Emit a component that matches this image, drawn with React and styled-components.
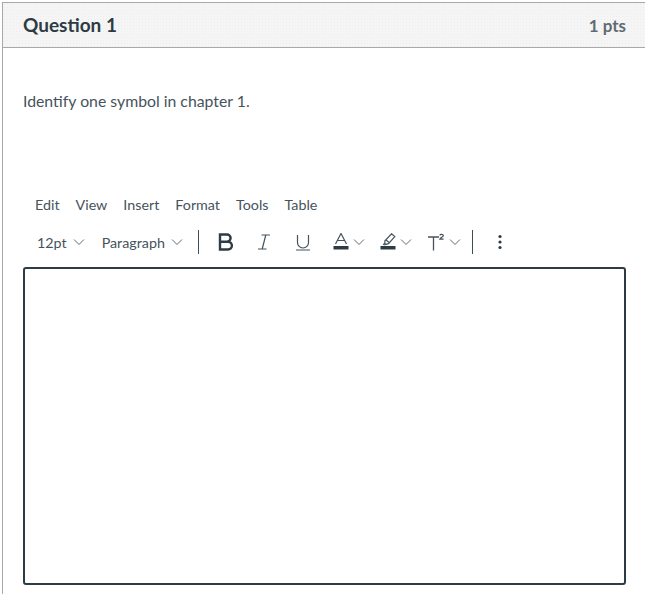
import React from "react";
import styled, { createGlobalStyle } from "styled-components";

const Global = createGlobalStyle`
  html, body { margin: 0; padding: 0; background: #fff; }
  body { font-family: Lato, "Open Sans", sans-serif; color: #2d3b45; }
  #root { width: 645px; height: 594px; overflow: hidden; }
`;

const Card = styled.div`
  margin: 2px 0 0 2px;
  height: 592px;
  box-sizing: border-box;
  border-top: 1px solid #a8a8a8;
  border-left: 1px solid #a8a8a8;
`;

const Header = styled.div`
  height: 45px;
  box-sizing: border-box;
  border-bottom: 1px solid #a8a8a8;
  background-color: #f5f5f5;
  background-image: radial-gradient(#eeeeee 0.6px, transparent 0.7px);
  background-size: 3px 3px;
  display: flex;
  align-items: center;
  justify-content: space-between;
  padding: 0 19px 0 20px;
`;

const Title = styled.div`
  font-size: 19px;
  font-weight: 700;
  color: #2d3b45;
  padding-bottom: 2px;
`;

const Points = styled.div`
  font-size: 17px;
  font-weight: 700;
  color: #5f6b73;
`;

const Body = styled.div`
  padding: 43px 19px 0 20px;
`;

const Prompt = styled.p`
  margin: 0;
  font-size: 15.8px;
  line-height: 20px;
  color: #46535c;
`;

const Menubar = styled.div`
  display: flex;
  margin-top: 83px;
  padding-left: 12px;
  gap: 16px;
  height: 20px;
  align-items: center;
`;

const MenuItem = styled.span`
  font-size: 14.3px;
  color: #46535c;
`;

const Toolbar = styled.div`
  display: flex;
  align-items: center;
  height: 34px;
  margin-top: 11px;
  padding-left: 14px;
`;

const Select = styled.span`
  display: flex;
  align-items: center;
  gap: 6px;
  font-size: 14.3px;
  color: #46535c;
  margin-right: ${(p) => p.$gap}px;
`;

const Divider = styled.span`
  width: 1px;
  height: 24px;
  background: #3f4d57;
  margin-right: ${(p) => p.$gap}px;
`;

const Tool = styled.span`
  display: flex;
  align-items: center;
  gap: 4px;
  margin-right: ${(p) => p.$gap}px;
  color: #2d3b45;
`;

const Editor = styled.div`
  margin-top: 8px;
  width: 603px;
  height: 318px;
  box-sizing: border-box;
  border: 2px solid #2d3b45;
  border-radius: 3px;
  background: #fff;
`;

const Chevron = () => (
  <svg width="12" height="8" viewBox="0 0 12 8" fill="none" stroke="#5f6b73" strokeWidth="1">
    <path d="M1 1.5 6 6.5 11 1.5" />
  </svg>
);

const Bold = () => (
  <svg width="16" height="18" viewBox="0 0 16 18" fill="none" stroke="#2d3b45" strokeWidth="2.4">
    <path d="M2 1.5H9a3.6 3.6 0 0 1 0 7.2H2V1.5ZM2 8.7H10a3.9 3.9 0 0 1 0 7.8H2V8.7Z" />
  </svg>
);

const Italic = () => (
  <svg width="14" height="16" viewBox="0 0 14 16" fill="none" stroke="#46535c" strokeWidth="1.2">
    <path d="M4.5 1H13M1 15H9.5M8.8 1 5.2 15" />
  </svg>
);

const Underline = () => (
  <svg width="16" height="17" viewBox="0 0 16 17" fill="none" stroke="#46535c" strokeWidth="1.2">
    <path d="M2.5 1v7.5a5.5 5.5 0 0 0 11 0V1M1 16H15" />
  </svg>
);

const TextColor = () => (
  <svg width="16" height="18" viewBox="0 0 16 18" fill="none">
    <path d="M2.5 11 8 0.5l5.5 10.5M4.4 7.5h7.2" stroke="#46535c" strokeWidth="1.2" />
    <path d="M0.5 13h15v3.5H0.5z" fill="#2d3b45" />
  </svg>
);

const Highlight = () => (
  <svg width="16" height="18" viewBox="0 0 16 18" fill="none">
    <path d="M11.5 0.8 14.8 3.6 8.5 10.6 5 11.6 4.8 8ZM5.8 6.8 9.4 9.8M4.9 10 3.2 11.8" stroke="#46535c" strokeWidth="1.2" />
    <path d="M0.5 13h15v3.5H0.5z" fill="#2d3b45" />
  </svg>
);

const Superscript = () => (
  <svg width="18" height="18" viewBox="0 0 18 18" fill="none">
    <path d="M1 4h11M6.5 4v13.5" stroke="#46535c" strokeWidth="1.3" />
    <path d="M12.8 2.4c.4-1.4 3.6-1.3 3.5.3 0 1.2-2.6 1.8-3.5 3.5h3.8" stroke="#46535c" strokeWidth="1.2" />
  </svg>
);

const Dots = () => (
  <svg width="4" height="16" viewBox="0 0 4 16" fill="#2d3b45">
    <circle cx="2" cy="2.5" r="1.6" />
    <circle cx="2" cy="8" r="1.6" />
    <circle cx="2" cy="13.5" r="1.6" />
  </svg>
);

export default function App() {
  return (
    <>
      <Global />
      <Card>
        <Header>
          <Title>Question 1</Title>
          <Points>1 pts</Points>
        </Header>
        <Body>
          <Prompt>Identify one symbol in chapter 1.</Prompt>
          <Menubar>
            {["Edit", "View", "Insert", "Format", "Tools", "Table"].map((m) => (
              <MenuItem key={m}>{m}</MenuItem>
            ))}
          </Menubar>
          <Toolbar>
            <Select $gap={17}>12pt <Chevron /></Select>
            <Select $gap={15}>Paragraph <Chevron /></Select>
            <Divider $gap={19} />
            <Tool $gap={23}><Bold /></Tool>
            <Tool $gap={24}><Italic /></Tool>
            <Tool $gap={22}><Underline /></Tool>
            <Tool $gap={15}><TextColor /><Chevron /></Tool>
            <Tool $gap={15}><Highlight /><Chevron /></Tool>
            <Tool $gap={11}><Superscript /><Chevron /></Tool>
            <Divider $gap={25} />
            <Tool $gap={0}><Dots /></Tool>
          </Toolbar>
          <Editor />
        </Body>
      </Card>
    </>
  );
}
